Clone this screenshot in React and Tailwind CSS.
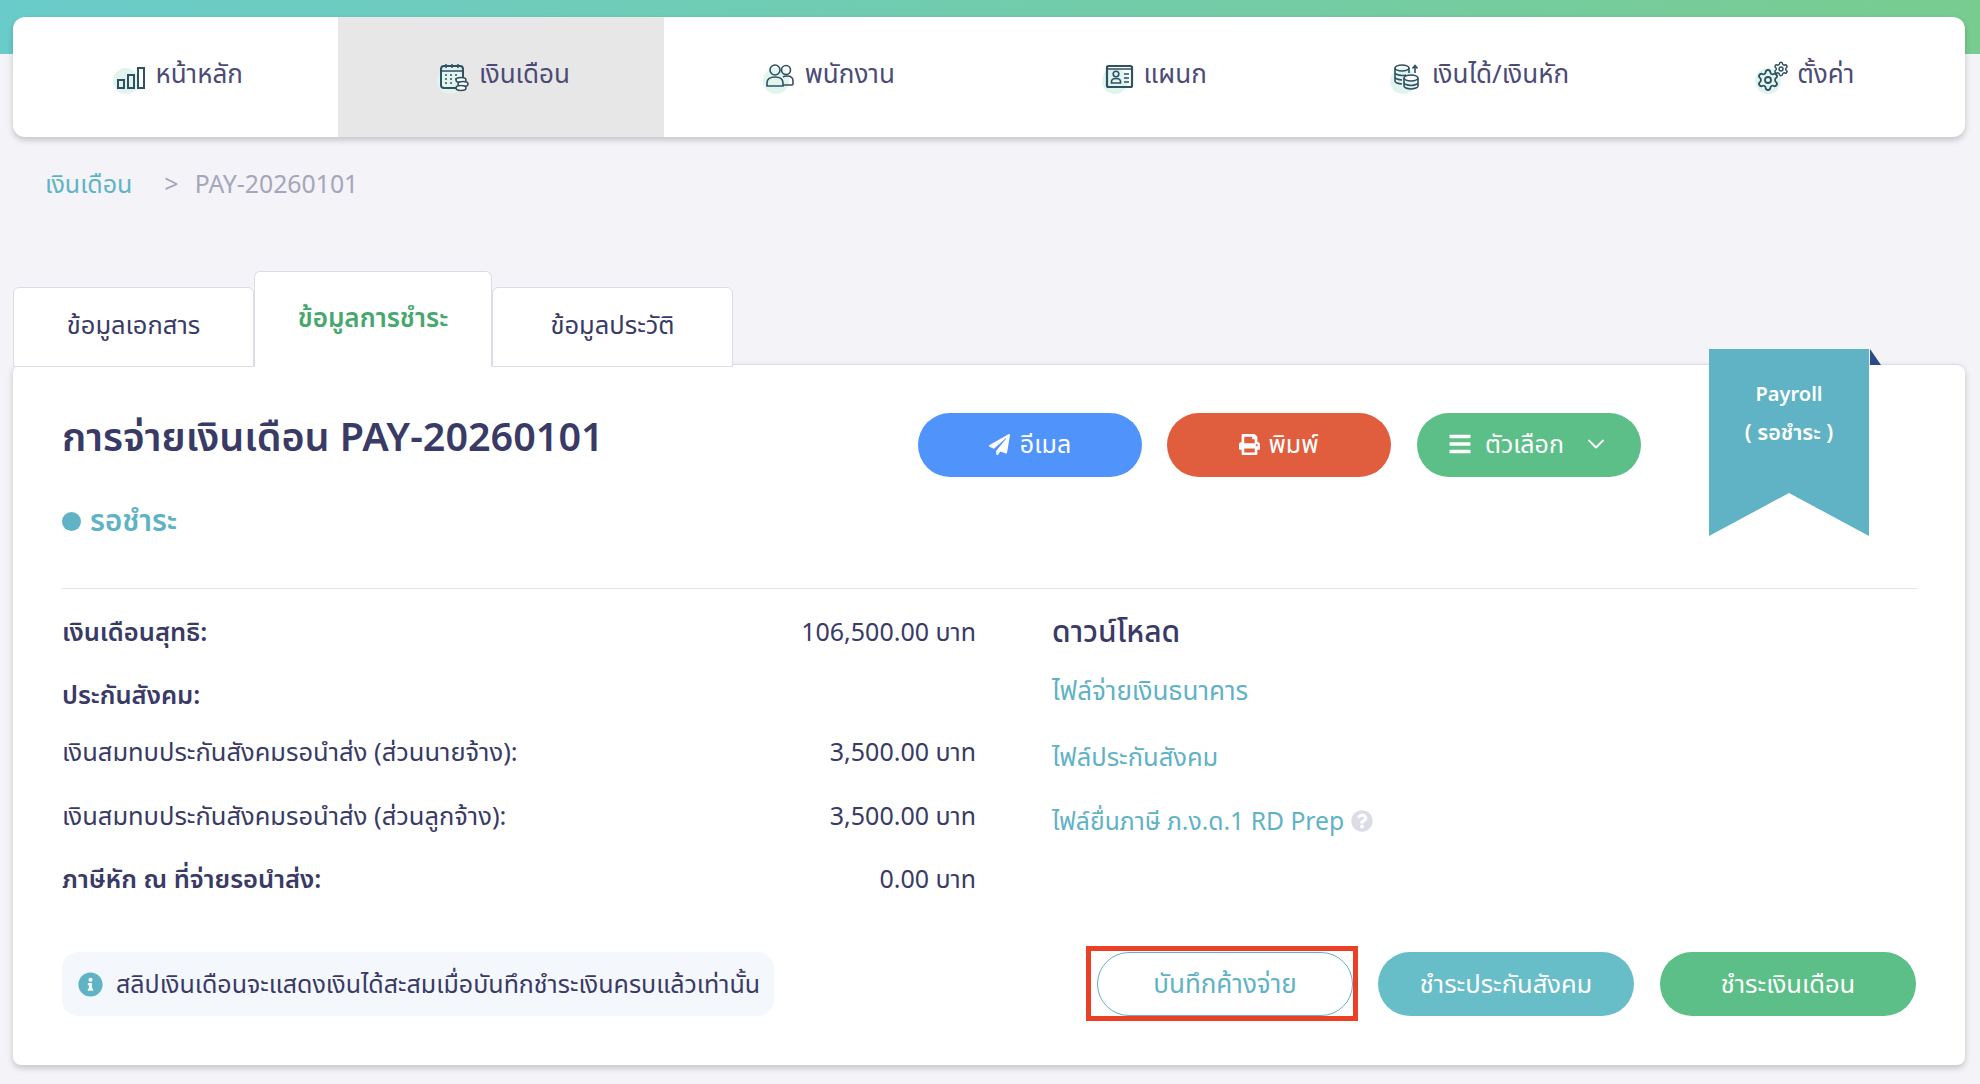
import React from "react";
import { ChevronDown, Settings } from "lucide-react";
import { FaPaperPlane, FaPrint, FaBars, FaInfoCircle, FaQuestionCircle } from "react-icons/fa";

const F = "[font-family:'Noto_Sans','Noto_Sans_Thai','Open_Sans',sans-serif]";
const navy = "text-[#393a66]";

function Blob({ children }) {
  return (
    <span className="relative inline-flex h-[34px] w-[34px] items-center justify-center">
      <span className="absolute bottom-0 left-0 h-[26px] w-[26px] rounded-full bg-[#e2f4ee]" />
      <svg viewBox="0 0 30 28" className="relative h-[28px] w-[30px] overflow-visible" fill="none" stroke="#2e5163" strokeWidth="1.6">
        {children}
      </svg>
    </span>
  );
}

const icons = {
  home: (
    <>
      <rect x="3" y="17" width="6" height="8" strokeWidth="2" />
      <rect x="13" y="12" width="6" height="13" strokeWidth="2" />
      <rect x="23" y="5" width="6" height="20" strokeWidth="2" />
    </>
  ),
  pay: (
    <>
      <rect x="2" y="3" width="22" height="22" rx="3" strokeWidth="2" />
      <path d="M2 8h22M7 1v4M13 1v4M19 1v4" strokeWidth="1.500" />
      <path d="M6 12h2M11 12h2M16 12h2M6 16h2M11 16h2M16 16h2M6 20h2M11 20h2" strokeWidth="1.500" />
      <ellipse cx="22" cy="17" rx="5" ry="2.500" fill="#fff" />
      <ellipse cx="24" cy="21" rx="5" ry="2.500" fill="#fff" />
      <ellipse cx="22" cy="25" rx="5" ry="2.500" fill="#fff" />
    </>
  ),
  staff: (
    <>
      <circle cx="10" cy="7" r="5" />
      <circle cx="21" cy="7" r="4.500" />
      <path d="M2 23v-3c0-4 3-6 8-6s8 2 8 6v3zM18 14c1-.7 2-1 4-1 4 0 6 2 6 5v3a1 1 0 0 1-1 1h-9" />
    </>
  ),
  dept: (
    <>
      <rect x="3" y="3" width="25" height="21" rx="1.500" strokeWidth="2.200" />
      <path d="M3 6h25" strokeWidth="1.500" />
      <circle cx="12" cy="11" r="2.800" />
      <path d="M7.500 20v-1.500c0-2 2-3 4.500-3s4.500 1 4.500 3V20zM20 11h5M20 15h5M20 19h5" />
    </>
  ),
  money: (
    <>
      <ellipse cx="10" cy="5" rx="7" ry="3" />
      <path d="M3 5v13c0 1.600 3 3 7 3M17 5v5M3 9.500c0 1.600 3 3 7 3 1.500 0 2.800-.2 4-.6M3 14c0 1.600 3 3 7 3" />
      <ellipse cx="19" cy="15" rx="7" ry="3" fill="#fff" />
      <path d="M12 15v8c0 1.600 3 3 7 3s7-1.400 7-3v-8M12 19.500c0 1.600 3 3 7 3s7-1.400 7-3" />
      <path d="M23 10V3M20.500 5.500 23 2.500l2.500 3" />
    </>
  ),
  cog: (
    <>
      <Settings x="-1" y="5" width="24" height="24" stroke="#2e5163" strokeWidth="1.800" />
      <Settings x="16" y="-2" width="16" height="16" stroke="#2e5163" strokeWidth="2.200" />
    </>
  ),
};

const nav = [
  ["home", "หน้าหลัก"],
  ["pay", "เงินเดือน"],
  ["staff", "พนักงาน"],
  ["dept", "แผนก"],
  ["money", "เงินได้/เงินหัก"],
  ["cog", "ตั้งค่า"],
];

function Pill({ className = "", children }) {
  return (
    <button className={`flex h-[64px] items-center justify-center rounded-full pb-[2px] ${className}`}>
      {children}
    </button>
  );
}

function Row({ label, value, strong, className = "" }) {
  return (
    <div className={`flex h-[63px] items-center justify-between ${className}`}>
      <span className={strong ? `text-[25.500px] font-semibold ${navy}` : `text-[25.500px] ${navy}`}>{label}</span>
      {value && <span className={`pt-[2px] text-[25px] ${navy}`}>{value}</span>}
    </div>
  );
}

export default function App() {
  return (
    <div className={`${F} min-h-[1084px] bg-[#f3f3f8] bg-[linear-gradient(90deg,#6accca,#78cc90)] bg-[length:100%_54px] bg-no-repeat pl-[13px] pr-[15px] pt-[17px] pb-[19px]`}>
      <nav className="grid h-[120px] grid-cols-6 overflow-hidden rounded-[12px] bg-white shadow-[0_3px_6px_rgba(0,0,0,0.2)]">
        {nav.map(([k, t], i) => (
          <a key={k} className={`flex items-center justify-center gap-[8px] pl-[5px] text-[26px] text-[#4b4b76] ${i === 1 ? "bg-[#e7e7e7]" : ""}`}>
            <Blob>{icons[k]}</Blob>
            <span className="pb-[8px]">{t}</span>
          </a>
        ))}
      </nav>

      <div className="flex h-[134px] items-start px-[32px] pt-[28px] text-[25px]">
        <a className="text-[#5fb3c6]">เงินเดือน</a>
        <span className="ml-[32px] text-[#a5a5bb]">&gt;</span>
        <span className="ml-[16px] text-[24.800px] text-[#a5a5bb]">PAY-20260101</span>
      </div>

      <div className="relative z-10 -mb-[3px] flex items-end">
        <div className={`flex h-[80px] w-[241px] items-center justify-center rounded-t-[6px] border border-[#dcdce8] bg-white pb-[5px] text-[25.500px] ${navy}`}>ข้อมูลเอกสาร</div>
        <div className="flex h-[96px] w-[238px] items-start justify-center rounded-t-[6px] border border-b-0 border-[#dcdce8] bg-white pt-[26px] text-[26px] font-semibold text-[#46a86c]">ข้อมูลการชำระ</div>
        <div className={`flex h-[80px] w-[241px] items-center justify-center rounded-t-[6px] border border-[#dcdce8] bg-white pb-[5px] text-[25.500px] ${navy}`}>ข้อมูลประวัติ</div>
      </div>

      <section className="relative h-[701px] rounded-[8px] border-t border-[#dcdce8] bg-white pl-[49px] pr-[48px] pt-[48px] shadow-[0_3px_6px_rgba(0,0,0,0.2)]">
        <div className="absolute left-[1696px] top-[-16px] h-[187px] w-[160px] bg-[#60b2c5] [clip-path:polygon(0_0,100%_0,100%_100%,50%_77%,0_100%)]">
          <div className="pt-[26px] text-center text-[20px] font-semibold leading-[38px] text-white">
            Payroll
            <br />
            <span className="text-[21.500px]">( รอชำระ )</span>
          </div>
        </div>
        <div className="absolute left-[1857px] top-[-16px] h-[16px] w-[11px] bg-[#2b4a8a] [clip-path:polygon(0_0,100%_100%,0_100%)]" />

        <div className="flex h-[64px] items-start justify-between">
          <h1 className={`-mt-[6px] text-[39.500px] font-semibold ${navy}`}>การจ่ายเงินเดือน PAY-20260101</h1>
          <div className="mr-[276px] flex text-[25px]">
            <Pill className="w-[224px] bg-[#5094fb] text-white">
              <FaPaperPlane className="mr-[10px] h-[21px] w-[21px]" />
              อีเมล
            </Pill>
            <Pill className="ml-[25px] w-[224px] bg-[#e05d3d] text-white">
              <FaPrint className="mr-[8px] h-[21px] w-[21px]" />
              พิมพ์
            </Pill>
            <Pill className="ml-[26px] w-[224px] bg-[#5bbf87] text-white">
              <FaBars className="mr-[13px] h-[24px] w-[24px]" />
              ตัวเลือก
              <ChevronDown className="ml-[18px] h-[28px] w-[28px]" strokeWidth={1.600} />
            </Pill>
          </div>
        </div>

        <div className="mt-[21px] flex items-center gap-[9px]">
          <span className="h-[19px] w-[19px] rounded-full bg-[#60b2c5]" />
          <span className="pb-[2px] text-[29.500px] font-semibold text-[#60b2c5]">รอชำระ</span>
        </div>

        <div className="mt-[44px] border-t border-[#e4e4e4]" />

        <div className="mt-[10px] flex">
          <div className="w-[914px]">
            <Row label="เงินเดือนสุทธิ:" value="106,500.00 บาท" strong />
            <Row label="ประกันสังคม:" strong />
            <Row label="เงินสมทบประกันสังคมรอนำส่ง (ส่วนนายจ้าง):" value="3,500.00 บาท" className="-mt-[6px]" />
            <Row label="เงินสมทบประกันสังคมรอนำส่ง (ส่วนลูกจ้าง):" value="3,500.00 บาท" className="mt-[1px]" />
            <Row label="ภาษีหัก ณ ที่จ่ายรอนำส่ง:" value="0.00 บาท" strong />
          </div>
          <div className="ml-[76px]">
            <div className={`flex h-[63px] items-center text-[30px] font-medium ${navy}`}>ดาวน์โหลด</div>
            <div className="-mt-[4px] flex h-[65px] items-center text-[26px] text-[#60b2c5]">ไฟล์จ่ายเงินธนาคาร</div>
            <div className="flex h-[65px] items-center text-[25.500px] text-[#60b2c5]">ไฟล์ประกันสังคม</div>
            <div className="flex h-[65px] items-center gap-[7px] text-[24.700px] text-[#60b2c5]">
              ไฟล์ยื่นภาษี ภ.ง.ด.1 RD Prep
              <FaQuestionCircle className="h-[22px] w-[22px] text-[#dcdce6]" />
            </div>
          </div>
        </div>

        <div className="mt-[43px] flex items-center">
          <div className={`flex h-[64px] w-[712px] items-center gap-[13px] rounded-[16px] bg-[#f4f7fc] pl-[16px] text-[25px] ${navy}`}>
            <FaInfoCircle className="h-[25px] w-[25px] text-[#60b2c5]" />
            <span className="pb-[2px]">สลิปเงินเดือนจะแสดงเงินได้สะสมเมื่อบันทึกชำระเงินครบแล้วเท่านั้น</span>
          </div>
          <div className="relative ml-[323px]">
            <Pill className="w-[256px] border border-[#60b2c5] bg-white text-[26px] text-[#60b2c5]">บันทึกค้างจ่าย</Pill>
            <span className="absolute -bottom-[5px] -left-[11px] -right-[5px] -top-[6px] border-[5px] border-[#ea4025]" />
          </div>
          <Pill className="ml-[25px] w-[256px] bg-[#67bdc8] text-[25.500px] text-white">ชำระประกันสังคม</Pill>
          <Pill className="ml-[26px] w-[256px] bg-[#5bbf87] text-[25.500px] text-white">ชำระเงินเดือน</Pill>
        </div>
      </section>
    </div>
  );
}
